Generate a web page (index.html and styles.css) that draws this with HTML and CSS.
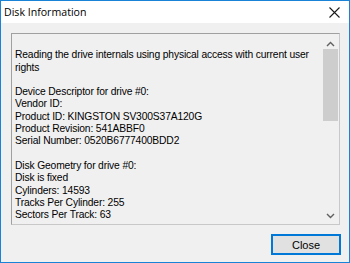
FILE: index.html
```html
<!DOCTYPE html>
<html>
<head>
<meta charset="utf-8">
<link rel="stylesheet" href="styles.css">
</head>
<body>
<div class="window">
  <div class="titlebar">
    <span class="title">Disk Information</span>
    <svg class="close-x" width="11" height="11" viewBox="0 0 11 11"><path d="M0.5 0.5 L10.5 10.5 M10.5 0.5 L0.5 10.5" stroke="#1a1a1a" stroke-width="1.1" fill="none"/></svg>
  </div>
  <div class="body">
    <div class="textbox">
      <div class="text">
        <div class="line">&nbsp;</div>
        <div class="line">Reading the drive internals using physical access with current user</div>
        <div class="line">rights</div>
        <div class="line">&nbsp;</div>
        <div class="line">Device Descriptor for drive #0:</div>
        <div class="line">Vendor ID:</div>
        <div class="line">Product ID: KINGSTON SV300S37A120G</div>
        <div class="line">Product Revision: 541ABBF0</div>
        <div class="line">Serial Number: 0520B6777400BDD2</div>
        <div class="line">&nbsp;</div>
        <div class="line">Disk Geometry for drive #0:</div>
        <div class="line">Disk is fixed</div>
        <div class="line">Cylinders: 14593</div>
        <div class="line">Tracks Per Cylinder: 255</div>
        <div class="line">Sectors Per Track: 63</div>
      </div>
      <div class="scrollbar">
        <svg class="arrow" width="9" height="6" viewBox="0 0 9 6"><path d="M1 5 L4.5 1.5 L8 5" stroke="#606060" stroke-width="1.4" fill="none"/></svg>
        <div class="track"><div class="thumb"></div></div>
        <svg class="arrow" width="9" height="6" viewBox="0 0 9 6"><path d="M1 1 L4.5 4.5 L8 1" stroke="#606060" stroke-width="1.4" fill="none"/></svg>
      </div>
    </div>
    <div class="footer">
      <button class="btn">Close</button>
    </div>
  </div>
</div>
</body>
</html>
```

FILE: styles.css
```css
* { box-sizing: border-box; }
html, body { margin: 0; padding: 0; }
body { width: 350px; height: 263px; overflow: hidden; background: #f0f0f0; }
.window {
  width: 350px; height: 263px;
  border: 1px solid #1883d7;
  background: #f0f0f0;
  display: flex; flex-direction: column;
}
.titlebar {
  height: 22px; background: #ffffff;
  display: flex; align-items: center; justify-content: space-between;
  padding: 0 9px 0 3px;
}
.title {
  font-family: "Open Sans", "Noto Sans", sans-serif;
  font-size: 10.6px; color: #000;
}
.close-x { margin-top: 1px; }
.body {
  flex: 1; display: flex; flex-direction: column;
  padding: 10px 8px 7px 10px;
}
.textbox {
  height: 192px; margin-right: 1px;
  border: 1px solid #a0a0a0;
  border-right-color: #c8c8c8; border-bottom-color: #c8c8c8;
  display: flex;
  background: #f0f0f0;
}
.text {
  flex: 1; padding: 3px 0 0 3px;
  font-family: "Liberation Sans", Arial, sans-serif;
  font-size: 10.3px; letter-spacing: -0.15px; line-height: 12.3px; color: #000;
  overflow: hidden; white-space: nowrap;
}
.scrollbar {
  width: 17px; display: flex; flex-direction: column; align-items: center;
  padding-top: 7px; padding-bottom: 5px;
}
.track { flex: 1; width: 100%; padding: 2px 1px 0 1px; }
.thumb { height: 72px; background: #cdcdcd; }
.arrow { flex: none; }
.footer { flex: 1; display: flex; justify-content: flex-end; align-items: flex-end; }
.btn {
  width: 70px; height: 21px;
  border: 1px solid #0078d7;
  box-shadow: inset 0 0 0 1px #0078d7;
  background: #e1e1e1;
  font-family: "Liberation Sans", Arial, sans-serif;
  font-size: 11px; color: #000; padding: 0;
}
```
